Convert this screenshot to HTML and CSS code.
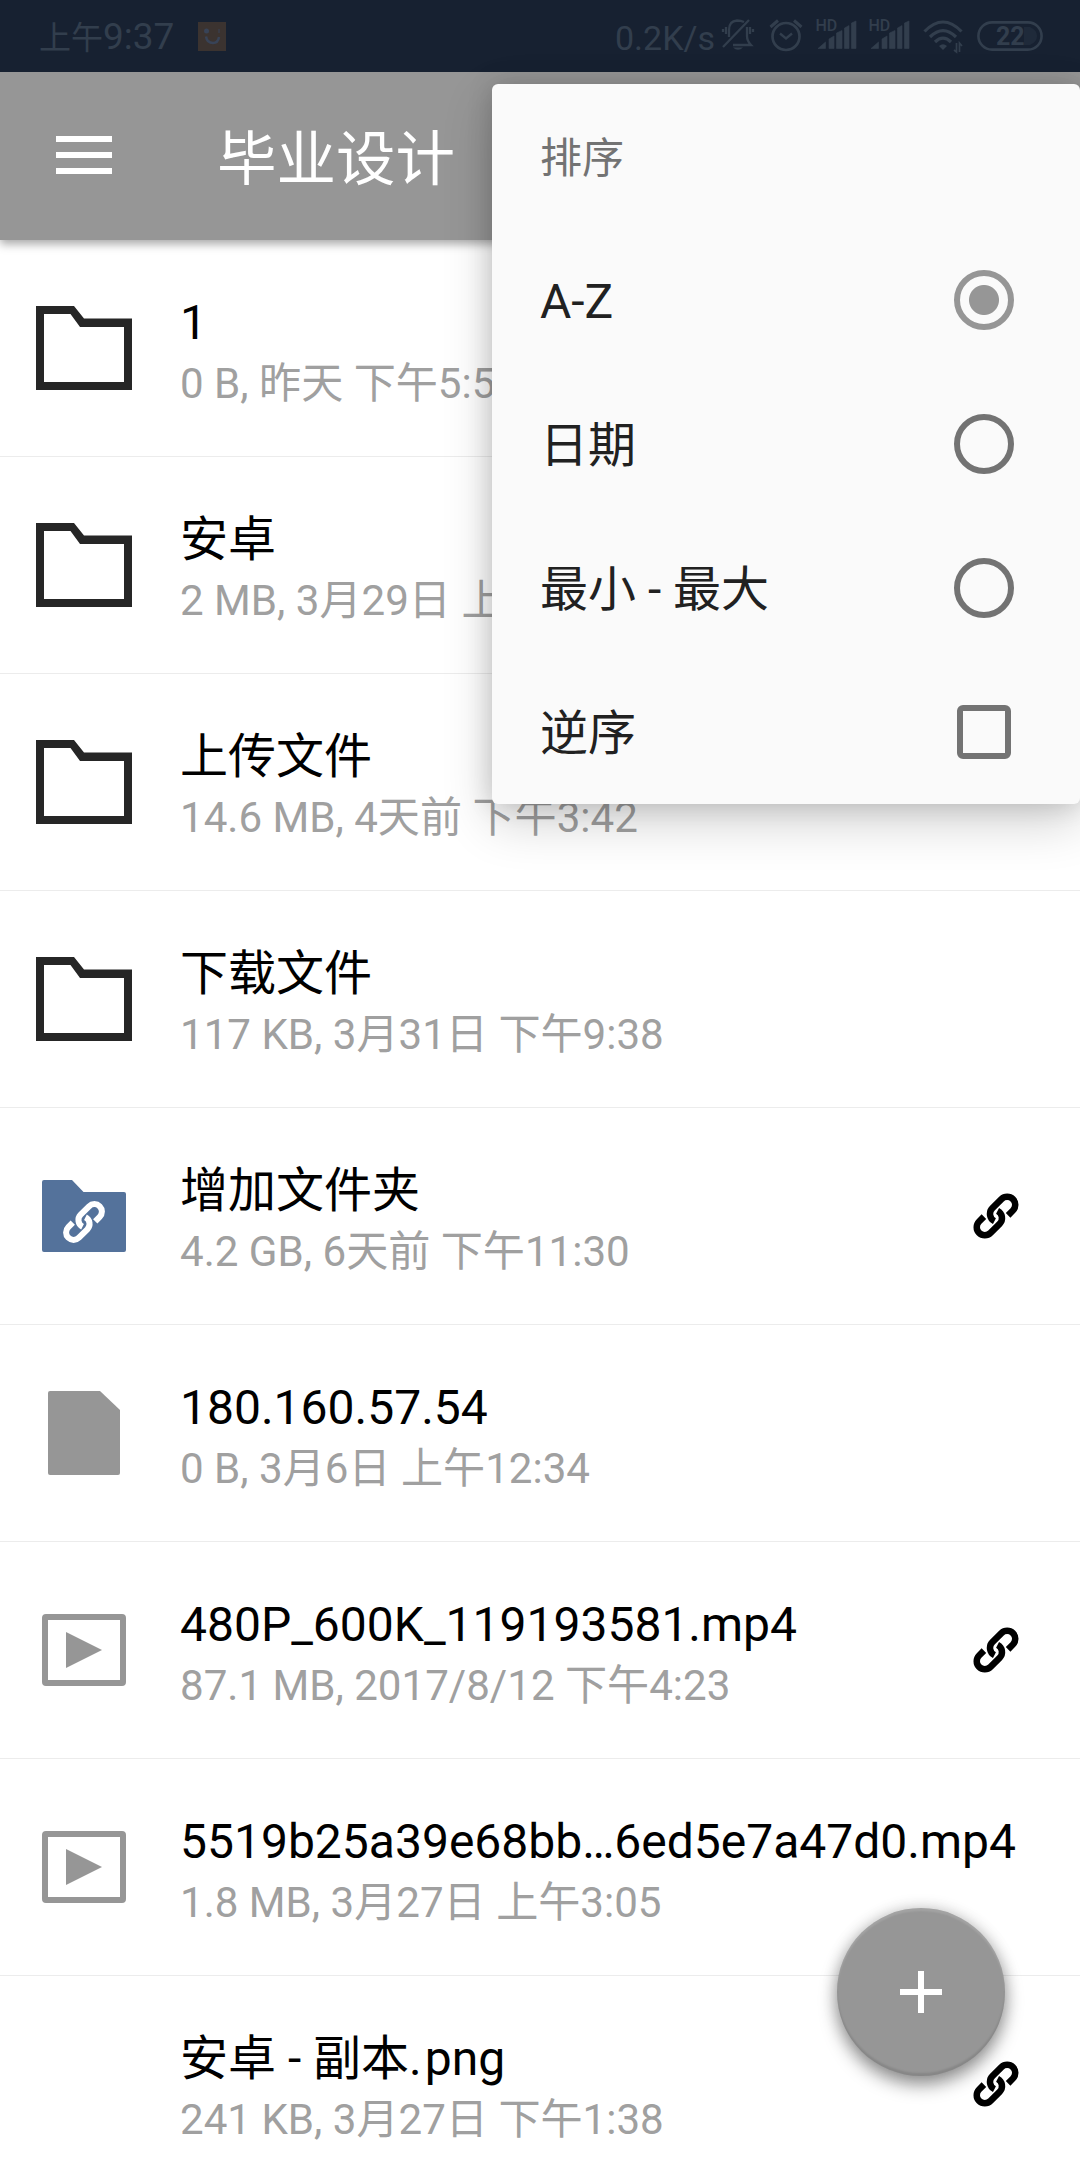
FILE: index.html
```html
<!DOCTYPE html>
<html lang="zh-CN">
<head>
<meta charset="utf-8">
<title>毕业设计</title>
<link rel="stylesheet" href="styles.css">
</head>
<body>
<svg class="defs" width="0" height="0" aria-hidden="true">
  <symbol id="folder" viewBox="0 0 96 84"><path fill="#262626" fill-rule="evenodd" d="M0 0H38L48 12.500H96V84H0ZM8 8V76H88V21H44L34.500 8Z"/></symbol>
  <symbol id="chain" viewBox="-24 -24 48 48"><g transform="rotate(-45)" fill="none" stroke="currentColor" stroke-width="6.500"><path d="M9 8.100H15.800A8.100 8.100 0 0 0 15.800 -8.100H3A8.100 8.100 0 0 0 -4.700 2.500"/><path d="M-9 -8.100H-15.800A8.100 8.100 0 0 0 -15.800 8.100H-3A8.100 8.100 0 0 0 4.700 -2.500"/></g></symbol>
  <symbol id="shared" viewBox="0 0 96 84"><path fill="#54729b" d="M8 6H36L47.500 18H88Q90 18 90 20V76Q90 78 88 78H8Q6 78 6 76V8Q6 6 8 6Z"/><use href="#chain" x="25.700" y="25.700" width="44.600" height="44.600" color="#fff"/></symbol>
  <symbol id="file" viewBox="0 0 96 84"><path fill="#969696" d="M14 0H64L84 19V82Q84 84 82 84H14Q12 84 12 82V2Q12 0 14 0Z"/></symbol>
  <symbol id="video" viewBox="0 0 96 84"><rect x="9" y="9" width="78" height="66" rx="1" fill="none" stroke="#969696" stroke-width="6"/><path fill="#969696" d="M30 24L66 42L30 60Z"/></symbol>
  <symbol id="signal" viewBox="0 0 42 36"><path d="M2 29.500L9.500 23V29.500Z M13 29.500V20L18 17V29.500Z M20.500 29.500V14L26 11.500V29.500Z M28.500 29.500V9L33 6.500V29.500Z M35.500 29.500V4L40 2V29.500Z" stroke-linejoin="round" stroke-width=".6" stroke="currentColor" fill="currentColor"/></symbol>
</svg>

<header class="status">
  <span class="clock"><span class="cjk">上午</span>9:37</span>
  <svg class="smile" width="28" height="29" viewBox="0 0 28 29"><path fill="#3b3330" d="M0 0H28V29H0Z"/><g stroke="#384357" fill="none"><path d="M8 14.500Q9 21 15 21Q20 21 21 15" stroke-width="2.500"/><path d="M21 7V11" stroke-width="1"/><circle cx="8.500" cy="9" r="2.500" fill="#384357" stroke="none"/></g></svg>
  <span class="speed">0.2K/s</span>
  <svg class="mute" width="34" height="36" viewBox="0 0 34 36"><g fill="none" stroke="currentColor" stroke-width="2.300"><path d="M2 29L28 2M8 19V12Q8 3 16 2.500Q20 2.500 23 4M26 9V18Q26 23 30 27H12"/><path d="M2 11V14M5 9V16M29 9V16M32 11V14"/></g><path d="M12 29.500H22Q17 34 12 29.500Z" fill="currentColor"/></svg>
  <svg class="alarm" width="34" height="36" viewBox="0 0 34 36"><g fill="none" stroke="currentColor" stroke-width="2.700"><circle cx="17" cy="18.500" r="13.500"/><path d="M11 15.500L17 20.500L23 15.500" stroke-width="2.300"/><path d="M1.500 9L9 2.500M25 2.500L32.500 9" stroke-width="3"/></g></svg>
  <svg class="bars" width="42" height="36"><use href="#signal"/><text x="-.5" y="11.500" class="hd">HD</text></svg>
  <svg class="bars bars-two" width="42" height="36"><use href="#signal"/><text x="-.5" y="11.500" class="hd">HD</text></svg>
  <svg class="wifi" width="41" height="36" viewBox="0 0 41 36"><g fill="none" stroke="currentColor" stroke-width="3.200"><path d="M1.500 12.500Q20 -6.500 38.500 12.500M7 18Q20 5 33 18M12 23Q20 15 28 23"/></g><path d="M16 27Q20 23.500 24 27L20 31Z" fill="currentColor"/><path d="M31.500 31L34 33V24M37 33V24L39.500 27" transform="translate(-.5)" fill="none" stroke="currentColor" stroke-width="1.700"/></svg>
  <svg class="battery" width="66" height="30" viewBox="0 0 66 30"><path d="M47 6H53Q60 9 60 15Q60 21 53 24H47Z" fill="#1f2a3a"/><rect x="1.400" y="1.400" width="63.200" height="27.200" rx="13.600" fill="none" stroke="currentColor" stroke-width="2.600"/><text x="19" y="24" class="level">22</text></svg>
</header>

<div class="appbar">
  <svg width="56" height="40" viewBox="0 0 56 40"><path d="M0 4H56M0 20H56M0 36H56" stroke="#fff" stroke-width="6"/></svg>
  <h1 class="title">毕业设计</h1>
</div>

<main class="list">
  <div class="row"><svg class="icon"><use href="#folder"/></svg><div class="text"><div class="name">1</div><div class="info">0 B, 昨天 下午5:53</div></div></div>
  <div class="row"><svg class="icon"><use href="#folder"/></svg><div class="text"><div class="name">安卓</div><div class="info">2 MB, 3月29日 上午</div></div></div>
  <div class="row"><svg class="icon"><use href="#folder"/></svg><div class="text"><div class="name">上传文件</div><div class="info">14.6 MB, 4天前 下午3:42</div></div></div>
  <div class="row"><svg class="icon"><use href="#folder"/></svg><div class="text"><div class="name">下载文件</div><div class="info">117 KB, 3月31日 下午9:38</div></div></div>
  <div class="row"><svg class="icon"><use href="#shared"/></svg><div class="text"><div class="name">增加文件夹</div><div class="info">4.2 GB, 6天前 下午11:30</div></div><svg class="link"><use href="#chain"/></svg></div>
  <div class="row"><svg class="icon"><use href="#file"/></svg><div class="text"><div class="name">180.160.57.54</div><div class="info">0 B, 3月6日 上午12:34</div></div></div>
  <div class="row"><svg class="icon"><use href="#video"/></svg><div class="text"><div class="name">480P_600K_119193581.mp4</div><div class="info">87.1 MB, 2017/8/12 下午4:23</div></div><svg class="link"><use href="#chain"/></svg></div>
  <div class="row"><svg class="icon"><use href="#video"/></svg><div class="text"><div class="name">5519b25a39e68bb…6ed5e7a47d0.mp4</div><div class="info">1.8 MB, 3月27日 上午3:05</div></div></div>
  <div class="row"><span class="icon"></span><div class="text"><div class="name">安卓 - 副本<span class="dot">.</span>png</div><div class="info">241 KB, 3月27日 下午1:38</div></div><svg class="link"><use href="#chain"/></svg></div>
</main>

<button class="fab" aria-label="添加"><svg width="42" height="42" viewBox="0 0 42 42"><path d="M0 21H42M21 0V42" stroke="#fff" stroke-width="6"/></svg></button>

<div class="menu">
  <div class="item heading">排序</div>
  <div class="item"><span>A-Z</span><i class="radio checked"></i></div>
  <div class="item"><span>日期</span><i class="radio"></i></div>
  <div class="item"><span>最小 - 最大</span><i class="radio"></i></div>
  <div class="item"><span>逆序</span><i class="check"></i></div>
</div>
</body>
</html>
```
FILE: styles.css
```css
* { box-sizing: border-box; }
body {
  margin: 0;
  width: 1080px;
  height: 2160px;
  position: relative;
  overflow: hidden;
  background: #fff;
  font-family: Roboto, "Noto Sans CJK SC", sans-serif;
}
svg { display: block; flex: none; }
.defs { position: absolute; }

.status {
  position: relative;
  z-index: 1;
  height: 72px;
  padding: 0 37px 0 39px;
  display: flex;
  align-items: center;
  background: #172131;
  color: #323e4d;
  white-space: nowrap;
}
.clock { width: 136px; margin-top: 2px; font-size: 37px; line-height: 44px; }
.clock .cjk { font-size: 32px; }
.smile { margin-left: 23px; }
.speed { margin-left: auto; width: 105px; font-size: 34px; line-height: 44px; margin-top: 3px; }
.mute { margin-left: 1px; }
.alarm { margin-left: 13.500px; }
.bars { margin-left: 13px; margin-top: 2px; overflow: visible; }
.bars-two { margin-left: 11px; }
.wifi { margin-left: 12.500px; margin-top: 2px; }
.battery { margin-left: 13px; }
.hd { font-size: 16px; font-weight: 500; fill: currentColor; }
.level { font-size: 25px; font-weight: 700; fill: currentColor; }

.appbar {
  position: relative;
  height: 168px;
  padding: 0 0 3px 56px;
  display: flex;
  align-items: center;
  gap: 105px;
  background: #969696;
  box-shadow: 0 4px 9px rgba(0, 0, 0, .35);
}
.title { margin: 11px 0 0; color: #fff; font-size: 59.500px; font-weight: 400; line-height: 72px; }

.row {
  height: 217px;
  padding-left: 36px;
  display: flex;
  align-items: center;
  border-bottom: 1px solid #ececec;
  white-space: nowrap;
}
.icon { width: 96px; height: 84px; flex: none; }
.text { flex: 1; min-width: 0; margin-left: 48px; padding-top: 8px; }
.name { color: #000; font-size: 48px; line-height: 56px; }
.dot { letter-spacing: 3px; }
.info { margin-top: 8px; color: #a0a0a0; font-size: 42.100px; line-height: 50px; }
.link { width: 48px; height: 48px; margin-right: 60px; color: #000; }

.menu {
  position: absolute;
  z-index: 2;
  left: 492px;
  top: 84px;
  width: 588px;
  background: #fafafa;
  border-radius: 6px;
  box-shadow: 0 18px 50px rgba(0, 0, 0, .19), 0 0 26px rgba(0, 0, 0, .16);
}
.item {
  height: 144px;
  padding: 0 66px 0 48px;
  display: flex;
  align-items: center;
  justify-content: space-between;
  color: #212121;
  font-size: 48px;
  line-height: 56px;
}
.item span { padding-top: 3px; }
.heading { padding-top: 5px; color: #737373; font-size: 42px; }
.radio {
  width: 60px;
  height: 60px;
  border: 6px solid #737373;
  border-radius: 50%;
}
.radio.checked {
  border-color: #969696;
  background: radial-gradient(circle, #969696 14.500px, transparent 15.500px);
}
.check {
  width: 54px;
  height: 54px;
  margin-right: 3px;
  border: 6px solid #737373;
  border-radius: 6px;
}

.fab {
  position: absolute;
  left: 837px;
  top: 1908px;
  width: 168px;
  height: 168px;
  padding: 0;
  border: 0;
  border-radius: 50%;
  display: grid;
  place-items: center;
  background: #969696;
  box-shadow: 0 9px 18px rgba(0, 0, 0, .4), 0 0 16px rgba(0, 0, 0, .16), inset 0 3px 2px rgba(255, 255, 255, .13), inset 0 -3px 2px rgba(0, 0, 0, .1);
}
```
